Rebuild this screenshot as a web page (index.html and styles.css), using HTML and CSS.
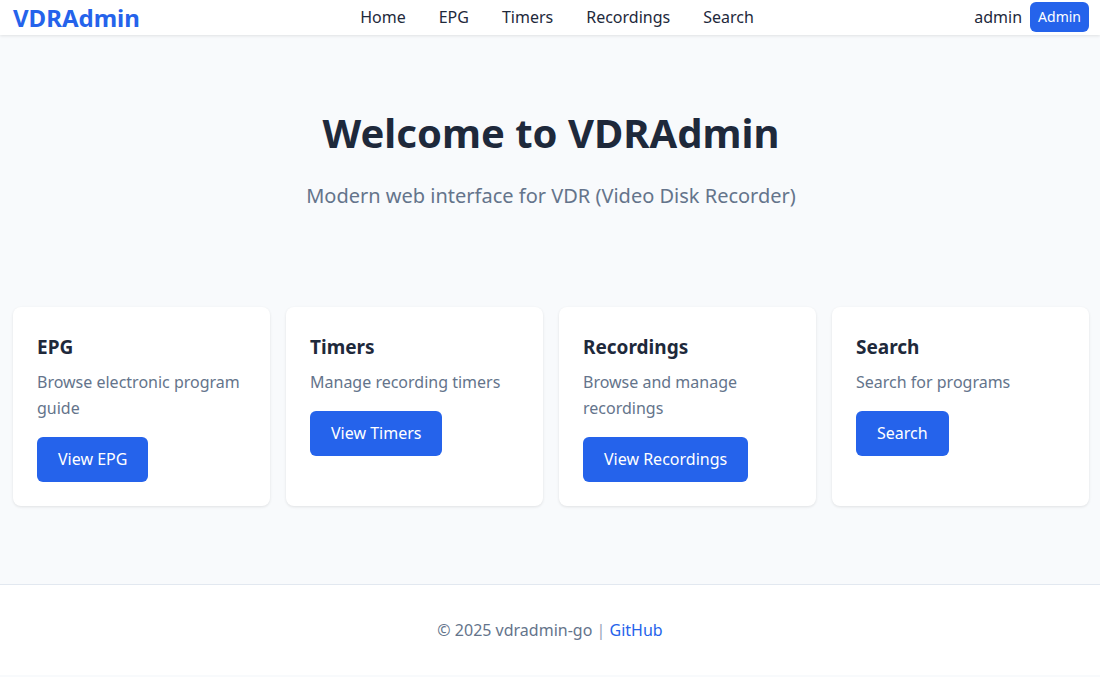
FILE: index.html
```html
<!DOCTYPE html>
<html lang="en">
<head>
<meta charset="utf-8">
<title>VDRAdmin</title>
<link rel="stylesheet" href="styles.css">
</head>
<body>
<header class="topbar">
  <a class="logo" href="#">VDRAdmin</a>
  <nav class="nav">
    <a href="#">Home</a>
    <a href="#">EPG</a>
    <a href="#">Timers</a>
    <a href="#">Recordings</a>
    <a href="#">Search</a>
  </nav>
  <div class="user">
    <span class="username">admin</span>
    <span class="badge">Admin</span>
  </div>
</header>
<main class="main">
  <section class="hero">
    <h1 class="hero-title">Welcome to VDRAdmin</h1>
    <p class="hero-sub">Modern web interface for VDR (Video Disk Recorder)</p>
  </section>
  <section class="cards">
    <div class="card">
      <h2 class="card-title">EPG</h2>
      <p class="card-text">Browse electronic program guide</p>
      <a class="btn" href="#">View EPG</a>
    </div>
    <div class="card">
      <h2 class="card-title">Timers</h2>
      <p class="card-text">Manage recording timers</p>
      <a class="btn" href="#">View Timers</a>
    </div>
    <div class="card">
      <h2 class="card-title">Recordings</h2>
      <p class="card-text">Browse and manage recordings</p>
      <a class="btn" href="#">View Recordings</a>
    </div>
    <div class="card">
      <h2 class="card-title">Search</h2>
      <p class="card-text">Search for programs</p>
      <a class="btn" href="#">Search</a>
    </div>
  </section>
</main>
<footer class="footer">
  © 2025 vdradmin-go <span class="sep">|</span> <a href="#">GitHub</a>
</footer>
</body>
</html>
```
FILE: styles.css
```css
* { box-sizing: border-box; }
html, body { margin: 0; padding: 0; }
body {
  font-family: "Noto Sans", "Open Sans", sans-serif;
  background: #f8fafc;
  color: #1e293b;
  font-size: 16px;
  line-height: 1.6;
}
a { text-decoration: none; }

.topbar {
  height: 35px;
  background: #ffffff;
  box-shadow: 0 1px 3px rgba(0,0,0,0.1);
  display: flex;
  align-items: center;
  justify-content: space-between;
  padding: 0 11px 0 13px;
  position: relative;
}
.logo {
  color: #2563eb;
  font-weight: 700;
  font-size: 24px;
  line-height: 32px;
}
.nav {
  display: flex;
  gap: 32.5px;
  position: absolute;
  left: 50%;
  transform: translateX(-50%);
  margin-left: 7px;
}
.nav a {
  color: #1e293b;
  font-size: 16px;
  padding: 0 0.25px;
}
.user {
  display: flex;
  align-items: center;
  gap: 8px;
}
.username { font-size: 16px; color: #1e293b; }
.badge {
  background: #2563eb;
  color: #fff;
  font-size: 14px;
  line-height: 20px;
  padding: 5px 8px;
  border-radius: 6px;
  margin-top: -2px;
}

.main {
  padding: 0 11px 0 13px;
}
.hero {
  text-align: center;
  padding-top: 74px;
}
.hero-title {
  margin: 0;
  font-size: 40px;
  line-height: 48px;
  font-weight: 700;
  color: #1e293b;
}
.hero-sub {
  margin: 24px 0 0;
  font-size: 20px;
  line-height: 30px;
  color: #64748b;
}
.cards {
  margin-top: 96px;
  display: grid;
  grid-template-columns: repeat(4, 1fr);
  gap: 16px;
  padding-bottom: 78px;
}
.card {
  background: #fff;
  border-radius: 8px;
  box-shadow: 0 1px 3px rgba(0,0,0,0.1);
  padding: 24px;
  display: flex;
  flex-direction: column;
  align-items: flex-start;
}
.card-title {
  margin: 0;
  font-size: 19px;
  line-height: 32px;
  font-weight: 700;
  color: #1e293b;
}
.card-text {
  margin: 6px 0 0;
  color: #64748b;
  font-size: 16px;
  line-height: 26px;
}
.btn {
  margin-top: 16px;
  background: #2563eb;
  color: #fff;
  padding: 12px 21px;
  line-height: 21px;
  border-radius: 6px;
  font-size: 16px;
}

.footer {
  background: #fff;
  border-top: 1px solid #e2e8f0;
  padding: 32px 0;
  text-align: center;
  color: #64748b;
  font-size: 16px;
  line-height: 26px;
  margin-bottom: 2px;
}
.footer .sep { color: #94a3b8; }
.footer a { color: #2563eb; }
```
